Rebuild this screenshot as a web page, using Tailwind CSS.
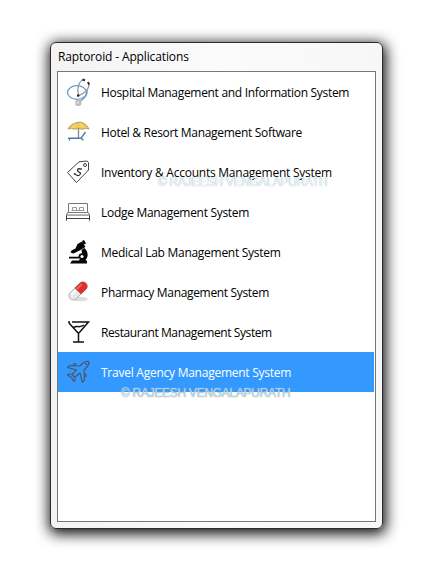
<!DOCTYPE html>
<html lang="en">
<head>
<meta charset="utf-8">
<title>Raptoroid - Applications</title>
<script src="https://cdn.jsdelivr.net/npm/@tailwindcss/browser@4"></script>
</head>
<body class="w-[435px] h-[578px] overflow-hidden bg-white pl-[50px] pt-[42px] font-['Open_Sans','Noto_Sans',sans-serif] text-[12px] text-black">
<main class="relative flex flex-col w-[333px] h-[487px] rounded-[6px] border border-[#292b2d] bg-linear-to-r from-[#f3f3f3] via-[#fbfbfb] to-[#f7f7f7] shadow-[1px_3px_14px_2px_rgba(0,0,0,0.95)] px-[6px] pb-[6px]">
  <h1 class="h-[28px] shrink-0 pl-px leading-[28px] whitespace-nowrap tracking-[-0.13px]">Raptoroid - Applications</h1>
  <ul class="flex-1 border border-[#777] bg-white pr-px">
    <li class="flex h-10 items-center pl-[7px] gap-2">
      <svg class="size-7 shrink-0" viewBox="0 0 28 28" fill="none"><ellipse cx="12" cy="14.500" rx="9.500" ry="6.800" stroke="#6b9bce" stroke-width="1.300"/><path d="M22 12C23 17 20 20 15 23.500" stroke="#6d9dcc" stroke-width="1.500"/><path d="M18.500 1.500C14 3 11.500 10 13.500 17.500C19.500 16 24.500 11 24 5" stroke="#999" stroke-width="1.300"/><path d="M17.500 1.500l2.500.8M23 4l1 2.500M12 17.500l2.300.3" stroke="#222" stroke-width="1.900"/><circle cx="13.300" cy="25" r="3.200" fill="#bbb"/><circle cx="12.800" cy="24.500" r="1.600" fill="#d5d5d5"/></svg>
      <span class="relative top-px whitespace-nowrap tracking-[-0.31px]">Hospital Management and Information System</span>
    </li>
    <li class="flex h-10 items-center pl-[7px] gap-2">
      <svg class="size-7 shrink-0" viewBox="0 0 28 28" fill="none"><path d="M13.500 4V20.500" stroke="#888" stroke-width="1.300"/><path d="M3 11C5 7 9 5 13.500 4.300S22 7 24 11L20.500 10.300l-3.500 1-3.500-1-3.500 1-3.500-1Z" fill="#efca59" stroke="#a08c5c" stroke-width=".8"/><path d="M10 6.500L8 9.500M15 5.500l3 4" stroke="#ffec99"/><path d="M3 20.300h13l4.500-6.300M16 20.300l2.500 2M4.500 20.500v2" stroke="#4c7ba7" stroke-width="1.400"/></svg>
      <span class="relative top-px whitespace-nowrap tracking-[-0.31px]">Hotel &amp; Resort Management Software</span>
    </li>
    <li class="flex h-10 items-center pl-[7px] gap-2">
      <svg class="size-7 shrink-0" viewBox="0 0 28 28" fill="none" stroke="#444"><path d="M2.500 14.500L14 3.800l8-.8 1.500 1.500V12L11.500 24.500Z"/><circle cx="20" cy="7" r="1.500"/><path d="M15.500 11.500C13.500 9.500 11.500 11.500 13 13.300s3.500 1.200 2 3.200-3.800 1-5-1M15.500 11.500l1.200-1M9 16.500l1-1" stroke="#222" stroke-width="1.200"/></svg>
      <span class="relative top-px whitespace-nowrap tracking-[-0.24px]">Inventory &amp; Accounts Management System</span>
    </li>
    <li class="flex h-10 items-center pl-[7px] gap-2">
      <svg class="size-7 shrink-0" viewBox="0 0 28 28" fill="none" stroke="#777"><path d="M3.500 14V5.500h19V14M2.500 14.500h21l1 2.500H1.500Z"/><path d="M7.500 12V9.500h4V12M14.500 12V9.500h4V12M6.500 12.500h13" stroke="#999"/><path d="M1.500 17v5.500M24.500 17v5.500" stroke="#333"/><path d="M1 20.500h24" stroke="#444"/><path d="M1.500 17.500h23" stroke="#aaa"/></svg>
      <span class="relative top-px whitespace-nowrap tracking-[-0.3px]">Lodge Management System</span>
    </li>
    <li class="flex h-10 items-center pl-[7px] gap-2">
      <svg class="size-7 shrink-0" viewBox="0 0 28 28" fill="#050505"><path d="M17 3l2-1 2 3.500-2 1ZM12.500 6l4.500-2.500 3.500 5.500-6 3.500-6 3-3-1 1-2 4-2ZM16.500 12l3-2c4 4 4 9 1 12l1.500 1v2.500H5L7 22.500H14l1-2H4v-1.800h9.500c0-2 1-3.500 3.500-3.500Z"/><circle cx="17" cy="18.500" r="1.600" fill="white"/></svg>
      <span class="relative top-px whitespace-nowrap tracking-[-0.28px]">Medical Lab Management System</span>
    </li>
    <li class="flex h-10 items-center pl-[7px] gap-2">
      <svg class="size-7 shrink-0" viewBox="0 0 28 28" fill="none"><ellipse cx="15" cy="21" rx="8" ry="2.200" fill="#ddd"/><g transform="rotate(-44 13 13)"><rect x="2" y="8.700" width="22" height="8.600" rx="4.300" fill="#e8e8e6" stroke="#999" stroke-width=".7"/><path d="M13 8.700h6.700a4.300 4.300 0 010 8.600H13Z" fill="#df3030" stroke="#aa4444" stroke-width=".6"/><path d="M14.500 10.700h5" stroke="#f36a64" stroke-width="1.600" stroke-linecap="round"/><path d="M6 11h5" stroke="#fff" stroke-width="2"/></g></svg>
      <span class="relative top-px whitespace-nowrap tracking-[-0.33px]">Pharmacy Management System</span>
    </li>
    <li class="flex h-10 items-center pl-[7px] gap-2">
      <svg class="size-7 shrink-0" viewBox="0 0 28 28" fill="none" stroke="#111" stroke-width="1.500"><path d="M7 4h16.500L13.500 15.500V24M8 24h11M3 4h2M4 5L13.500 15.500M8.500 9.500c4-2.500 6 1 10.500-2.500" /></svg>
      <span class="relative top-px whitespace-nowrap tracking-[-0.41px]">Restaurant Management System</span>
    </li>
    <li class="relative flex h-10 items-center pl-[7px] gap-2 bg-[#3399ff] text-white">
      <svg class="size-7 shrink-0" viewBox="0 0 28 28" fill="none" stroke="#46586b" stroke-width="1.200" stroke-linejoin="round"><path d="M23.500 3.500C21.500 3 19 4 17 6L15 8 5 7.500 2.500 9.500 11.500 11.800 7 16.500 4 16 2.500 17.300 6.500 19.300 8.500 23.500 10 22.300 9.700 19.300 15 15 17.300 24.300 19.500 22.300 19 12 21 10C23 8 24.500 5.500 23.500 3.500Z"/><path d="M20 5l2.200 2.200M8.500 7.500V5.800h2.200v1.800M19.300 18.300h1.700v-2.300h-1.700M7 16.500l2.700 2.800"/></svg>
      <span class="relative top-px whitespace-nowrap tracking-[-0.25px]">Travel Agency Management System</span>
    </li>
  </ul>
  <div class="absolute left-[107px] top-[131px] whitespace-nowrap font-['Liberation_Sans',sans-serif] text-[12px] leading-4 tracking-[-0.29px] text-white/80 [text-shadow:0_0_1px_#a9c3ca,0_0_1px_#b5cdd3]">© RAJEESH VENGALAPURATH</div>
  <div class="absolute left-[70px] top-[342px] whitespace-nowrap font-['Liberation_Sans',sans-serif] text-[12px] leading-4 tracking-[-0.29px] text-white/40 [text-shadow:0_0_1px_#8fb3c4,0_0_1px_#a5c0c8]">© RAJEESH VENGALAPURATH</div>
</main>
</body>
</html>
